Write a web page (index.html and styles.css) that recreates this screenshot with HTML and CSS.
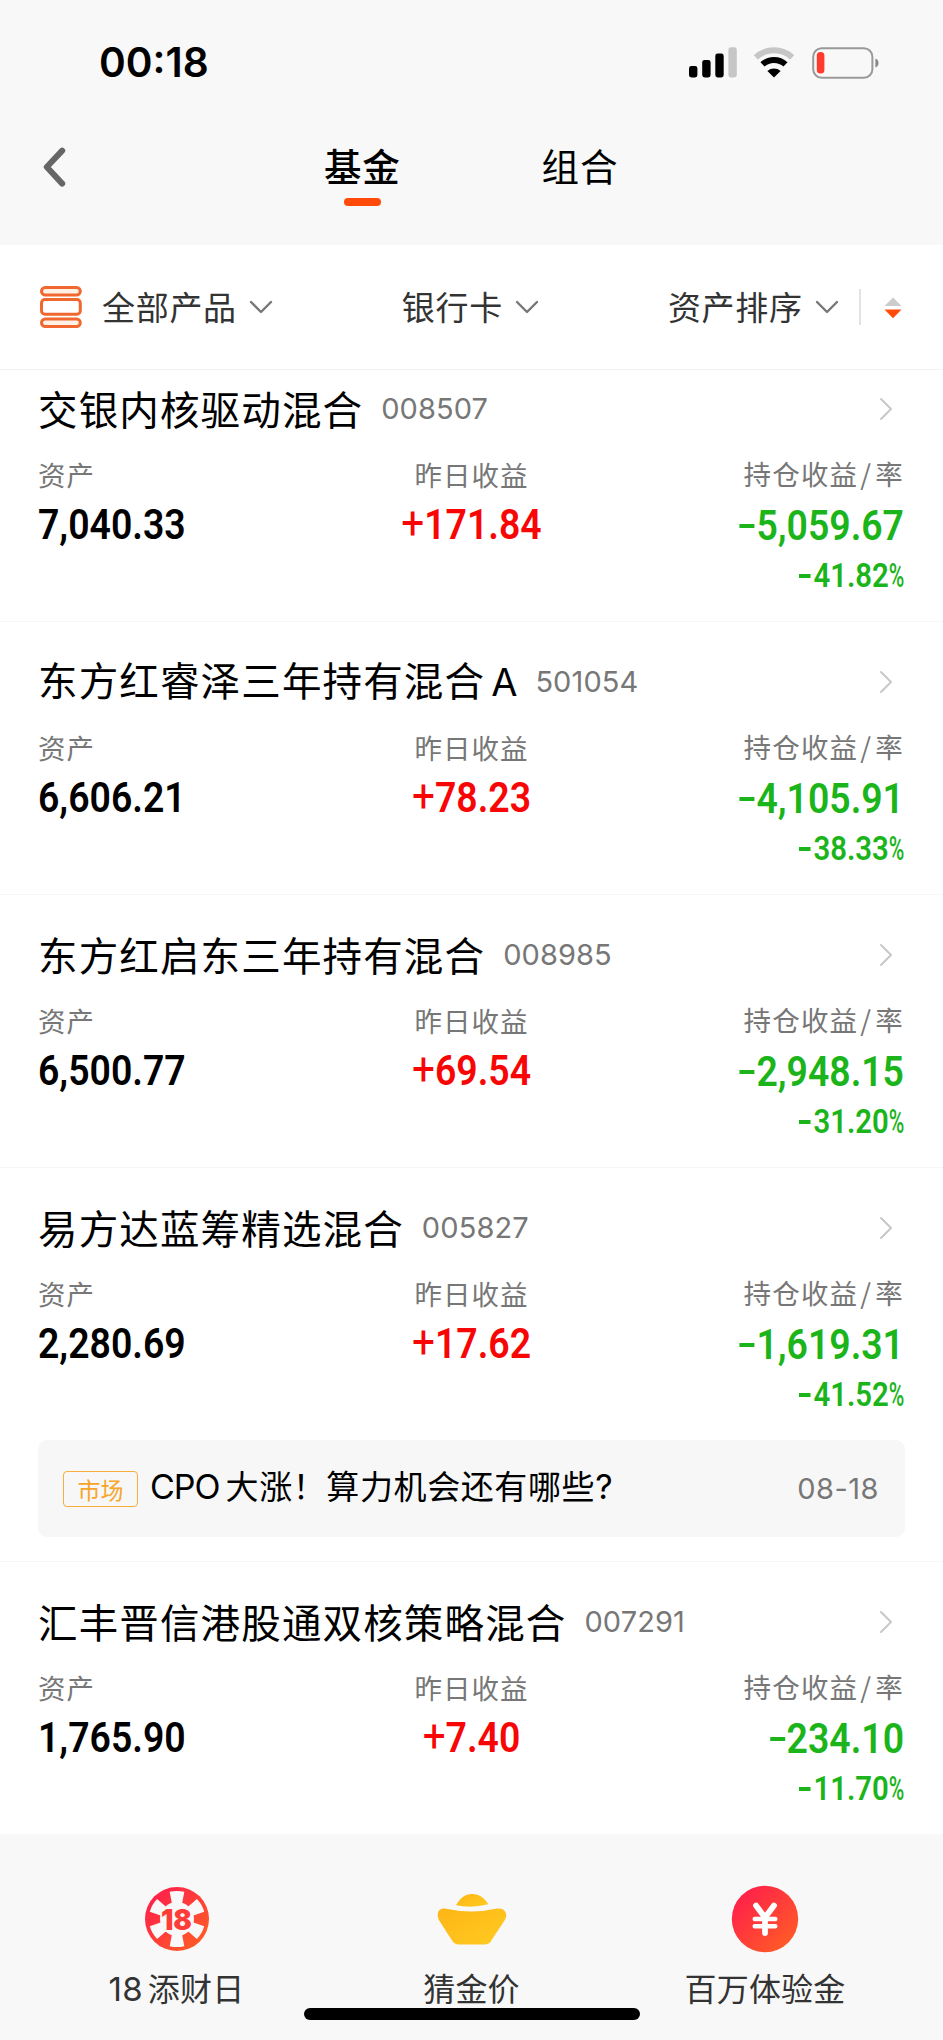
FILE: index.html
```html
<!DOCTYPE html>
<html lang="zh-CN">
<head>
<meta charset="utf-8">
<title>基金</title>
<link rel="stylesheet" href="styles.css">
</head>
<body>
<svg class="defs" width="0" height="0">
  <symbol id="down" viewBox="0 0 24 14"><path d="M2 2l10 10L22 2" fill="none" stroke="#777" stroke-width="2.4" stroke-linecap="round" stroke-linejoin="round"/></symbol>
  <symbol id="next" viewBox="0 0 14 24"><path d="M2 2l10 10L2 22" fill="none" stroke="#c8c8c8" stroke-width="2" stroke-linecap="round" stroke-linejoin="round"/></symbol>
</svg>
<div class="screen">
  <header class="head">
    <div class="status">
      <span class="time">00:18</span>
      <svg class="signal" width="48" height="31" viewBox="0 0 48 31"><rect x="0" y="19" width="8.4" height="11.5" rx="2.4"/><rect x="13.2" y="13" width="8.4" height="17.5" rx="2.4"/><rect x="26.3" y="6.5" width="8.4" height="24" rx="2.4"/><rect x="39.4" y="0.3" width="8.4" height="30.2" rx="2.4" fill="#c6c6c6"/></svg>
      <svg class="wifi" width="42" height="31" viewBox="0 0 42 31"><g fill="none"><path d="M2.8 10.4a27 27 0 0 1 36.4 0" stroke="#c6c6c6" stroke-width="6"/><path d="M9.5 17.4a17 17 0 0 1 23 0" stroke="#000" stroke-width="6"/></g><path d="M21 30.6l-6.6-6.7a10 10 0 0 1 13.2 0z"/></svg>
      <svg class="battery" width="68" height="32" viewBox="0 0 68 32"><rect x="1.2" y="1.2" width="59.2" height="29.6" rx="8.5" fill="none" stroke="#999" stroke-width="2"/><rect x="4.8" y="5" width="7.6" height="21.6" rx="3.6" fill="#ff3b30"/><path d="M63.4 11.6a4.8 4.8 0 0 1 0 9z" fill="#888"/></svg>
    </div>
    <nav class="nav">
      <svg class="back" width="24" height="44" viewBox="0 0 24 44"><path d="M20.2 5.6L4.8 22l15.4 16.6" fill="none" stroke="#666" stroke-width="6" stroke-linecap="round" stroke-linejoin="round"/></svg>
      <span class="tab active">基金</span>
      <span class="tab">组合</span>
    </nav>
  </header>

  <section class="filters">
    <svg class="stack" width="42" height="42" viewBox="0 0 42 42" fill="#fff0e6" stroke="#f0682f" stroke-width="3"><rect x="1.5" y="1.5" width="38.8" height="7.6" rx="3.8"/><rect x="1.5" y="13.6" width="38.8" height="14.6" rx="3.5" fill="#fff"/><rect x="1.5" y="32.9" width="38.8" height="7.6" rx="3.8"/></svg>
    <span class="filter all"><span class="filter-text">全部产品</span><svg class="down"><use href="#down"/></svg></span>
    <span class="filter card"><span class="filter-text">银行卡</span><svg class="down"><use href="#down"/></svg></span>
    <span class="filter sort"><span class="filter-text">资产排序</span><svg class="down"><use href="#down"/></svg></span>
    <i class="bar"></i>
    <svg class="order" width="18" height="22" viewBox="0 0 18 22"><path d="M9 .5l8.5 8.5H.5z" fill="#ccc"/><path d="M.5 12.5h17L9 21.3z" fill="#ff4a0a"/></svg>
  </section>

  <main class="list">
    <article class="fund">
      <h2 class="title"><span class="name">交银内核驱动混合</span><span class="code">008507</span><svg class="next"><use href="#next"/></svg></h2>
      <div class="figures">
        <div class="col"><p class="label">资产</p><p class="value">7,040.33</p></div>
        <div class="col mid"><p class="label">昨日收益</p><p class="value"><span class="plus">+</span>171.84</p></div>
        <div class="col end"><p class="label">持仓收益<span class="slash">/</span>率</p><p class="value"><b class="dash"></b>5,059.67</p><p class="rate"><b class="dash"></b>41.82<span class="pct">%</span></p></div>
      </div>
    </article>
    <article class="fund">
      <h2 class="title"><span class="name">东方红睿泽三年持有混合<span class="latin">A</span></span><span class="code">501054</span><svg class="next"><use href="#next"/></svg></h2>
      <div class="figures">
        <div class="col"><p class="label">资产</p><p class="value">6,606.21</p></div>
        <div class="col mid"><p class="label">昨日收益</p><p class="value"><span class="plus">+</span>78.23</p></div>
        <div class="col end"><p class="label">持仓收益<span class="slash">/</span>率</p><p class="value"><b class="dash"></b>4,105.91</p><p class="rate"><b class="dash"></b>38.33<span class="pct">%</span></p></div>
      </div>
    </article>
    <article class="fund">
      <h2 class="title"><span class="name">东方红启东三年持有混合</span><span class="code">008985</span><svg class="next"><use href="#next"/></svg></h2>
      <div class="figures">
        <div class="col"><p class="label">资产</p><p class="value">6,500.77</p></div>
        <div class="col mid"><p class="label">昨日收益</p><p class="value"><span class="plus">+</span>69.54</p></div>
        <div class="col end"><p class="label">持仓收益<span class="slash">/</span>率</p><p class="value"><b class="dash"></b>2,948.15</p><p class="rate"><b class="dash"></b>31.20<span class="pct">%</span></p></div>
      </div>
    </article>
    <article class="fund">
      <h2 class="title"><span class="name">易方达蓝筹精选混合</span><span class="code">005827</span><svg class="next"><use href="#next"/></svg></h2>
      <div class="figures">
        <div class="col"><p class="label">资产</p><p class="value">2,280.69</p></div>
        <div class="col mid"><p class="label">昨日收益</p><p class="value"><span class="plus">+</span>17.62</p></div>
        <div class="col end"><p class="label">持仓收益<span class="slash">/</span>率</p><p class="value"><b class="dash"></b>1,619.31</p><p class="rate"><b class="dash"></b>41.52<span class="pct">%</span></p></div>
      </div>
      <div class="notice"><span class="tag">市场</span><span class="news"><span class="news-latin">CPO</span>大涨！算力机会还有哪些<span class="news-latin">?</span></span><span class="date">08-18</span></div>
    </article>
    <article class="fund">
      <h2 class="title"><span class="name">汇丰晋信港股通双核策略混合</span><span class="code">007291</span><svg class="next"><use href="#next"/></svg></h2>
      <div class="figures">
        <div class="col"><p class="label">资产</p><p class="value">1,765.90</p></div>
        <div class="col mid"><p class="label">昨日收益</p><p class="value"><span class="plus">+</span>7.40</p></div>
        <div class="col end"><p class="label">持仓收益<span class="slash">/</span>率</p><p class="value"><b class="dash"></b>234.10</p><p class="rate"><b class="dash"></b>11.70<span class="pct">%</span></p></div>
      </div>
    </article>
  </main>

  <footer class="dock">
    <div class="entry">
      <svg width="68" height="68" viewBox="-34 -34 68 68">
        <defs><linearGradient id="red" x1="0" y1="0" x2="1" y2="1"><stop offset=".1" stop-color="#ff1f4b"/><stop offset=".9" stop-color="#ff5c26"/></linearGradient>
        <linearGradient id="gold" x1="0" y1="0" x2="1" y2="1"><stop offset="0" stop-color="#fdb515"/><stop offset="1" stop-color="#ffcb22"/></linearGradient></defs>
        <circle r="32" fill="url(#red)"/>
        <g fill="#f8f8f8"><circle r="17"/>
          <path id="spoke" d="M-7.3-27.2Q0-29 7.3-27.2L4.6-13h-9.2z"/>
          <use href="#spoke" transform="rotate(60)"/><use href="#spoke" transform="rotate(120)"/><use href="#spoke" transform="rotate(180)"/><use href="#spoke" transform="rotate(240)"/><use href="#spoke" transform="rotate(300)"/></g>
        <text class="chip-num" x="-.6" y="10.6" text-anchor="middle" textLength="31" lengthAdjust="spacingAndGlyphs">18</text>
      </svg>
      <span class="entry-label"><span class="entry-num">18</span>添财日</span>
    </div>
    <div class="entry">
      <svg width="72" height="68" viewBox="0 0 72 68"><g fill="url(#gold)"><path d="M20 20.2C24 13 29 9 36 9s12.5 4 16.3 10.2Q36 23.5 20 20.2z"/><path d="M8.5 23.6Q36 29.5 61 23.6C69 22.4 72.5 29 68.5 35.5L56 54.5Q53.6 59.5 48.5 59.5H23Q18 59.5 15.4 54.5L3.2 35.5C.3 29.5 1.5 23.6 8.5 23.6z"/></g></svg>
      <span class="entry-label">猜金价</span>
    </div>
    <div class="entry last">
      <svg width="68" height="68" viewBox="-34 -34 68 68"><circle r="33.2" fill="url(#red)"/><g fill="none" stroke="#fff" stroke-linecap="round" stroke-linejoin="round"><path d="M-9-13.5L0-1.5 9-13.5M0-2.5V14" stroke-width="5.8"/><path d="M-10.3 0h20.6M-10.3 7.2h20.6" stroke-width="4.4"/></g></svg>
      <span class="entry-label">百万体验金</span>
    </div>
    <i class="home"></i>
  </footer>
</div>
</body>
</html>
```
FILE: styles.css
```css
* { box-sizing: border-box; margin: 0; padding: 0; }
body { background: #fff; font-family: "Noto Sans CJK SC", sans-serif; color: #000; }
svg { display: block; flex: none; }
.defs { position: absolute; }
.screen { width: 943px; height: 2040px; overflow: hidden; display: flex; flex-direction: column; }

.head { height: 245px; background: #f8f8f8; flex: none; }
.status { height: 125px; padding-left: 99px; display: flex; align-items: center; }
.time { width: 590px; font: 600 40.6px/50px Inter, sans-serif; }
.wifi { margin-left: 16px; }
.battery { margin-left: 17px; }
.nav { height: 84px; display: flex; align-items: center; padding-left: 42px; }
.tab { position: relative; font-size: 37.5px; line-height: 56px; letter-spacing: .8px; margin-top: -4px; }
.back { margin-right: 258px; }
.tab + .tab { margin-left: 141px; }
.active { font-weight: 500; }
.active::after { content: ""; position: absolute; left: 20px; top: 61px; width: 37px; height: 8px; border-radius: 4px; background: #ff4a0a; }

.filters { height: 125px; flex: none; border-bottom: 1px solid #f3f3f3; padding-left: 40px; display: flex; align-items: center; background: #fff; }
.filter { display: flex; align-items: center; font-size: 33px; line-height: 48px; letter-spacing: .7px; color: #333; }
.filter-text { margin-top: -2px; }
.down { width: 24px; height: 14px; margin-left: 12px; }
.all { margin-left: 20px; }
.card { margin-left: 129px; }
.sort { margin-left: 129px; }
.bar { width: 2px; height: 36px; background: #e3e3e3; margin-left: 20px; }
.order { margin: 2px 0 0 23px; }

.list { flex: none; height: 1464px; overflow: hidden; }
.fund { min-height: 273px; padding: 32px 38px 0; border-bottom: 1px solid #f6f6f6; }
.fund:first-child { margin-top: -21px; }
.fund:last-child { border: 0; }
.title { display: flex; align-items: center; height: 60px; margin-top: -2px; font-weight: 400; }
.name { font-size: 39.5px; line-height: 60px; letter-spacing: 1.15px; white-space: nowrap; margin-top: -3px; }
.latin { font-family: Inter, sans-serif; font-size: 38px; margin-left: 6px; letter-spacing: 0; }
.code { font: 400 29px/60px Inter, sans-serif; color: #777; margin-left: 18px; letter-spacing: .1px; }
.next { width: 14px; height: 24px; margin-left: auto; margin-right: 12px; }
.figures { display: grid; grid-template-columns: 1fr 1fr 1fr; margin-top: 17px; }
.label { font-size: 27.5px; line-height: 36px; height: 36px; letter-spacing: 1px; color: #777; white-space: nowrap; }
.value { font: 600 42.5px/46px Roboto, sans-serif; height: 46px; margin-top: 10px; white-space: nowrap; transform: scaleX(.88); transform-origin: 0 50%; }
.mid { text-align: center; }
.mid .value { color: #f80505; transform-origin: 50% 50%; }
.plus { font-weight: 400; font-size: 46px; line-height: 40px; }
.end { text-align: right; color: #1bb41b; padding-right: 1px; }
.end .label { letter-spacing: 1.2px; position: relative; top: -1px; }
.slash { margin: 0 3px 0 2px; }
.end .value, .rate { transform-origin: 100% 50%; }
.end .value { position: relative; top: 1px; }
.rate { font: 600 33px/36px Roboto, sans-serif; height: 36px; margin-top: 10px; transform: scaleX(.89); }
.dash { display: inline-block; width: 17px; height: 4.5px; background: currentColor; vertical-align: 12px; margin-right: 2px; }
.rate .dash { width: 13px; height: 4px; vertical-align: 9px; margin-right: 3px; }
.pct { display: inline-block; font-weight: 500; width: 17px; transform: scaleX(.72); transform-origin: 0 50%; }

.notice { display: flex; align-items: center; height: 97px; margin: 27px 0 24px; padding: 0 26px 0 25px; border-radius: 9px; background: #f7f7f7; }
.tag { width: 75px; height: 36px; border: 1.5px solid #f8ad3c; border-radius: 4px; color: #f8a52a; font-size: 23px; line-height: 34px; text-align: center; }
.news { margin: -5px 0 0 12px; font-size: 33px; line-height: 48px; letter-spacing: .6px; white-space: nowrap; }
.news-latin { font-family: Inter, sans-serif; font-size: 34px; letter-spacing: -1px; margin-right: 6px; }
.date { margin-left: auto; font: 400 29px/40px Inter, sans-serif; letter-spacing: .5px; color: #777; }

.dock { position: relative; flex: none; height: 206px; padding: 51px 29px 0; background: #f8f8f8; display: grid; grid-template-columns: 1fr 1fr 1fr; }
.entry { display: flex; flex-direction: column; align-items: center; }
.last { padding-right: 3px; }
.entry-label { margin-top: 10px; font-size: 32px; line-height: 48px; letter-spacing: .2px; color: #333; white-space: nowrap; }
.entry-num { font-family: Inter, sans-serif; font-size: 33px; margin-right: 5px; }
.chip-num { font: 900 29px Inter, sans-serif; fill: #ff3d38; }
.home { position: absolute; left: 304px; top: 174px; width: 336px; height: 12px; border-radius: 6px; background: #000; }
```
